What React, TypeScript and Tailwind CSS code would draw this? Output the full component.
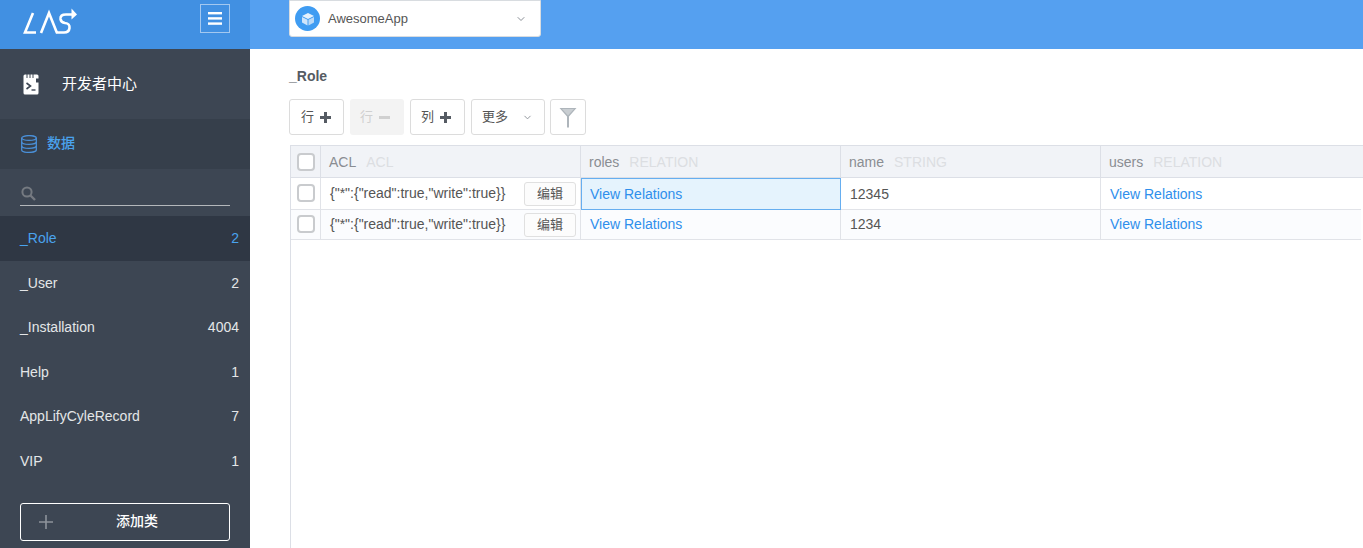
import { ChevronDown } from 'lucide-react';

const classes = [
  { name: '_Role', count: 2 },
  { name: '_User', count: 2 },
  { name: '_Installation', count: 4004 },
  { name: 'Help', count: 1 },
  { name: 'AppLifyCyleRecord', count: 7 },
  { name: 'VIP', count: 1 },
];

const rows = [
  { name: '12345', selected: true },
  { name: '1234', selected: false },
];

const cjk = "font-['Liberation_Sans','Noto_Sans_CJK_SC',sans-serif]";

function Checkbox() {
  return <span className="block h-[18px] w-[18px] rounded-[4px] border-2 border-[#c9cbce] bg-white" />;
}

function PlusIcon() {
  return (
    <svg width="11" height="11" viewBox="0 0 11 11" fill="#555b63">
      <path d="M4 0 H7 V4 H11 V7 H7 V11 H4 V7 H0 V4 H4 Z" />
    </svg>
  );
}

function HeaderCell({ label, type, last }: { label: string; type: string; last?: boolean }) {
  return (
    <div className={`flex items-center pl-[8px] pt-[1px] ${last ? '' : 'border-r border-[#dcdfe6]'}`}>
      <span className="text-[14px] text-[#8a8d92]">{label}</span>
      <span className="ml-[10px] text-[14px] text-[#dcdee2]">{type}</span>
    </div>
  );
}

function ToolButton({ children, className }: { children: React.ReactNode; className?: string }) {
  return (
    <button className={`flex h-[36px] items-center rounded-[3px] border border-[#dcdcdc] bg-white text-[13px] text-[#555] ${className ?? ''}`}>
      {children}
    </button>
  );
}

export default function App() {
  return (
    <div className={`flex h-[548px] w-[1363px] overflow-hidden bg-white ${cjk}`}>
      {/* Sidebar */}
      <aside className="flex w-[250px] shrink-0 flex-col bg-[#3d4653]">
        <div className="flex h-[49px] shrink-0 items-start justify-between bg-[#4190e2] pl-[23px] pr-[20px] pt-[4px]">
          <svg width="54" height="26" viewBox="0 0 54 26" fill="none" stroke="white" strokeWidth="2.6" className="mt-[4px]">
            <path d="M10 5 L2 24.5 H13" />
            <path d="M18 25 L26 5 L34 25" />
            <path d="M51 6.5 H43 Q37 6.5 37.5 11 Q38 14.5 42 15 Q47 15.5 46.5 20 Q46 24.5 41 24.5 H33" />
            <path d="M48.5 0.5 L54 6.5 L48.5 11.5 Z" fill="white" stroke="none" />
          </svg>
          <div className="flex h-[29px] w-[30px] items-center justify-center border border-[#a3c8f0]">
            <svg width="14" height="13" viewBox="0 0 14 13" fill="white">
              <rect x="0" y="0" width="14" height="2.4" />
              <rect x="0" y="5.2" width="14" height="2.4" />
              <rect x="0" y="10.4" width="14" height="2.4" />
            </svg>
          </div>
        </div>

        <div className="flex h-[70px] shrink-0 items-center pl-[23px]">
          <svg width="16" height="21" viewBox="0 0 16 21" className="shrink-0">
            <path d="M2 0.5 H14 Q15.5 0.5 15.5 2 V19 Q15.5 20.5 14 20.5 H2 Q0.5 20.5 0.5 19 V2 Q0.5 0.5 2 0.5 Z" fill="white" />
            <path d="M4 0 V4 M7 0 V4 M10 0 V4" stroke="#3d4653" strokeWidth="1" />
            <path d="M13 4.5 H16 V8.5 H13 Z" fill="#3d4653" />
            <path d="M3.5 9 L7.5 12 L3.5 15" stroke="#3d4653" strokeWidth="1.6" fill="none" />
            <path d="M8.5 16 H12.5" stroke="#3d4653" strokeWidth="1.4" />
          </svg>
          <span className="ml-[23px] text-[15px] text-white">开发者中心</span>
        </div>

        <div className="flex h-[50px] shrink-0 items-center bg-[#363f4b] pb-[1px] pl-[21px]">
          <svg width="16" height="18" viewBox="0 0 16 18" fill="none" stroke="#4a90d9" strokeWidth="1.3">
            <ellipse cx="8" cy="3" rx="7.3" ry="2.4" />
            <path d="M0.7 3 V15 C0.7 16.4 4 17.4 8 17.4 C12 17.4 15.3 16.4 15.3 15 V3" />
            <path d="M0.7 7 C0.7 8.4 4 9.4 8 9.4 C12 9.4 15.3 8.4 15.3 7" />
            <path d="M0.7 11 C0.7 12.4 4 13.4 8 13.4 C12 13.4 15.3 12.4 15.3 11" />
          </svg>
          <span className="ml-[10px] text-[14px] font-medium text-[#4aa3ee]">数据</span>
        </div>

        <div className="h-[47px] shrink-0 px-[20px] pt-[12px]">
          <div className="flex h-[25px] items-center border-b border-[#b4b7bb] pl-[1px]">
            <svg width="15" height="15" viewBox="0 0 15 15" fill="none" stroke="#757a81">
              <circle cx="6" cy="6" r="4.6" strokeWidth="2" />
              <path d="M9.5 9.5 L14 14" strokeWidth="2.4" />
            </svg>
          </div>
        </div>

        <div className="flex flex-col pt-[0.4px]">
          {classes.map((item, index) => (
            <div
              key={item.name}
              className={`flex h-[44.5px] items-center justify-between pl-[20px] pr-[11px] text-[14px] ${
                index === 0 ? 'bg-[#2f3744] text-[#4aa3ee]' : 'text-[#e4e6e8]'
              }`}
            >
              <span>{item.name}</span>
              <span>{item.count}</span>
            </div>
          ))}
        </div>

        <div className="px-[20px] pt-[20px]">
          <div className="relative flex h-[38px] items-center justify-center rounded-[3px] border border-white pb-[1px] text-[14px] font-medium text-white">
            <svg width="14" height="14" viewBox="0 0 14 14" stroke="#8d939b" strokeWidth="1.6" className="absolute left-[18px]">
              <path d="M7 0 V14 M0 7 H14" />
            </svg>
            <span className="ml-[24px]">添加类</span>
          </div>
        </div>
      </aside>

      {/* Main */}
      <div className="flex min-w-0 flex-1 flex-col">
        <header className="flex h-[49px] shrink-0 items-start bg-[#55a0f0] pl-[39px]">
          <div className="flex h-[37px] w-[252px] items-center rounded-b-[3px] border border-[#d8dce0] bg-white pl-[5px] pr-[13px]">
            <div className="flex h-[25px] w-[25px] items-center justify-center rounded-full bg-[#3f9cf2]">
              <svg width="14" height="14" viewBox="0 0 14 14">
                <path d="M7 1 L13 4 L7 7 L1 4 Z" fill="#e4f1fd" />
                <path d="M1 5 L6.5 7.8 V13.5 L1 10.5 Z" fill="#cfe5fb" />
                <path d="M13 5 L7.5 7.8 V13.5 L13 10.5 Z" fill="#b9d9f8" />
              </svg>
            </div>
            <span className="ml-[8px] flex-1 text-[13px] text-[#555]">AwesomeApp</span>
            <ChevronDown size={12} color="#8a8f96" />
          </div>
        </header>

        <div className="flex min-h-0 flex-1 flex-col pt-[19px]">
          <h1 className="pl-[39px] text-[14px] leading-[16px] font-bold text-[#555b63]">_Role</h1>

          <div className="mt-[15px] flex items-center pl-[39px]">
            <ToolButton className="w-[55px] gap-[6px] pl-[11px]">
              行<PlusIcon />
            </ToolButton>
            <div className="ml-[6px] flex h-[36px] w-[54px] items-center gap-[6px] rounded-[3px] bg-[#f3f3f3] pl-[10px] text-[13px] text-[#d0d0d0]">
              行<span className="block h-[3px] w-[11px] bg-[#d0d0d0]" />
            </div>
            <ToolButton className="ml-[6px] w-[55px] gap-[6px] pl-[10px]">
              列<PlusIcon />
            </ToolButton>
            <ToolButton className="ml-[6px] w-[74px] justify-between pl-[10px] pr-[11px]">
              更多<ChevronDown size={11} color="#8a8f96" />
            </ToolButton>
            <ToolButton className="ml-[5px] w-[36px] justify-center">
              <svg width="18" height="21" viewBox="0 0 18 21">
                <path d="M0.5 1 H17.5 L10 9.5 V20.5 H8 V9.5 Z" fill="#aeb5bb" />
                <path d="M3 2 H15 L9 8.5 Z" fill="#c9ced2" />
              </svg>
            </ToolButton>
          </div>

          {/* Table */}
          <div className="ml-[40px] mt-[10px] flex min-h-0 flex-1 flex-col border-l border-[#dcdfe6]">
            <div className="grid h-[33px] shrink-0 grid-cols-[30px_260px_260px_260px_260px] border-t border-b border-[#dcdfe6] bg-[#f1f3f7]">
              <div className="flex items-center justify-center border-r border-[#dcdfe6]">
                <Checkbox />
              </div>
              <HeaderCell label="ACL" type="ACL" />
              <HeaderCell label="roles" type="RELATION" />
              <HeaderCell label="name" type="STRING" />
              <HeaderCell label="users" type="RELATION" last />
            </div>

            {rows.map((row, index) => (
              <div
                key={row.name}
                className={`grid w-[1070px] shrink-0 grid-cols-[30px_260px_260px_260px_260px] border-b border-[#e1e3e8] text-[14px] ${
                  index === 0 ? 'h-[32px] bg-white' : 'h-[30px] bg-[#fbfcfe]'
                }`}
              >
                <div className="flex items-center justify-center border-r border-[#e1e3e8] pb-[1px]">
                  <Checkbox />
                </div>
                <div className="flex items-center justify-between border-r border-[#e1e3e8] pl-[9px] pr-[4px] text-[#555]">
                  <span>{'{"*":{"read":true,"write":true}}'}</span>
                  <span className="flex h-[24px] w-[52px] items-center justify-center rounded-[3px] border border-[#e0e0e0] bg-[#fcfcfc] text-[13px]">编辑</span>
                </div>
                <div
                  className={`flex items-center pl-[8px] text-[#2f8fec] ${
                    row.selected ? '-mb-px border border-[#66aef0] bg-[#e5f3fd]' : 'border-r border-[#e1e3e8] pl-[9px]'
                  }`}
                >
                  View Relations
                </div>
                <div className={`flex items-center border-r border-[#e1e3e8] pl-[9px] text-[#555] ${row.selected ? 'pt-[1px]' : ''}`}>{row.name}</div>
                <div className={`flex items-center pl-[9px] text-[#2f8fec] ${row.selected ? 'pt-[1px]' : ''}`}>View Relations</div>
              </div>
            ))}
          </div>
        </div>
      </div>
    </div>
  );
}
